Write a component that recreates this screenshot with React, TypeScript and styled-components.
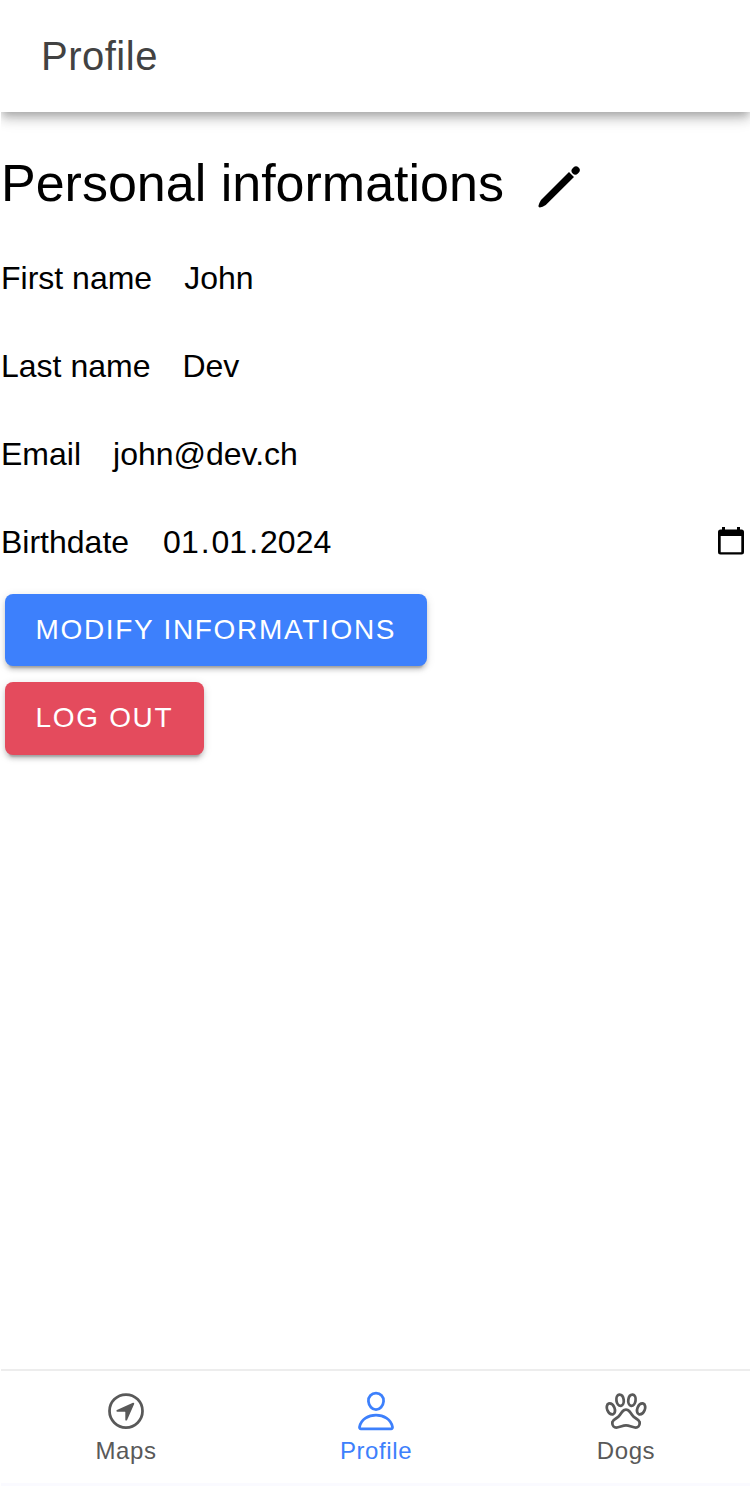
import React from "react";
import styled, { createGlobalStyle } from "styled-components";
import { IoNavigateCircleOutline, IoPawOutline, IoPersonOutline } from "react-icons/io5";

const GlobalStyle = createGlobalStyle`
  * { box-sizing: border-box; }
  body { margin: 0; background: #fff; font-family: "Liberation Sans", Arial, sans-serif; color: #000; }
`;

const Page = styled.div`
  display: flex;
  flex-direction: column;
  height: 1486px;
  padding-left: 1px;
  overflow: hidden;
`;

const Header = styled.header`
  display: flex;
  align-items: center;
  flex: none;
  height: 112px;
  padding-left: 40px;
  background: #fff;
  box-shadow: 0 4px 8px -2px rgba(0, 0, 0, 0.2), 0 8px 10px rgba(0, 0, 0, 0.14), 0 2px 20px rgba(0, 0, 0, 0.12);
  clip-path: inset(0 0 -40px 0);
`;

const Title = styled.h1`
  margin: 0;
  font-size: 40px;
  font-weight: 400;
  letter-spacing: 0.5px;
  color: #424242;
`;

const Content = styled.main`
  flex: 1;
  display: flex;
  flex-direction: column;
  align-items: flex-start;
`;

const Heading = styled.h2`
  display: flex;
  align-items: center;
  height: 62px;
  margin: 40px 0 20px;
  font-size: 52px;
  font-weight: 400;
  line-height: 62px;
`;

const EditIcon = styled.svg`
  display: block;
  width: 52px;
  height: 52px;
  margin: 6px 0 0 29px;
`;

const Row = styled.div`
  display: flex;
  align-items: center;
  width: 100%;
  height: 88px;
  padding-right: 4px;
  font-size: 32px;
`;

const Value = styled.span`
  flex: 1;
  padding-left: 32px;
`;

const DatePart = styled.span`
  padding: 0 2px;
`;

const CalendarIcon = styled.svg`
  display: block;
  width: 30px;
  height: 30px;
`;

const Button = styled.button<{ $color: string; $height: number }>`
  height: ${(p) => p.$height}px;
  margin: 8px 4px;
  padding: 0 31px ${(p) => (p.$height - 71)}px 30.5px;
  border: 0;
  border-radius: 8px;
  background: ${(p) => p.$color};
  color: #fff;
  font: 400 28px "Liberation Sans", Arial, sans-serif;
  letter-spacing: 1.68px;
  box-shadow: 0 6px 2px -4px rgba(0, 0, 0, 0.2), 0 4px 4px rgba(0, 0, 0, 0.14), 0 2px 10px rgba(0, 0, 0, 0.12);
`;

const TabBar = styled.nav`
  display: flex;
  flex: none;
  height: 117px;
  margin-right: -1px;
  border-top: 2px solid #ededed;
  border-bottom: 3px solid #fafaff;
`;

const Tab = styled.a<{ $active?: boolean }>`
  flex: 1;
  display: flex;
  flex-direction: column;
  align-items: center;
  padding-top: 18px;
  color: ${(p) => (p.$active ? "#3d80fc" : "#595959")};
  font-size: 24px;
  line-height: 28px;
  letter-spacing: 0.6px;

  svg {
    display: block;
    margin-bottom: 4px;
  }
`;

export default function App() {
  return (
    <>
      <GlobalStyle />
      <Page>
        <Header>
          <Title>Profile</Title>
        </Header>
        <Content>
          <Heading>
            Personal informations
            <EditIcon viewBox="0 0 52 52">
              <path d="M42.300 10.900 43 10.200" stroke="#000" strokeWidth="7.400" strokeLinecap="round" />
              <path d="M36 12 41 17 12.800 45Q9.500 47.300 6.800 47.600 5.100 47.400 5.500 45.600 6 43.200 8 40z" />
            </EditIcon>
          </Heading>
          <Row>
            First name<Value>John</Value>
          </Row>
          <Row>
            Last name<Value>Dev</Value>
          </Row>
          <Row>
            Email<Value>john@dev.ch</Value>
          </Row>
          <Row>
            Birthdate
            <Value>
              <DatePart>01</DatePart>.<DatePart>01</DatePart>.<DatePart>2024</DatePart>
            </Value>
            <CalendarIcon viewBox="0 0 30 30">
              <path
                fillRule="evenodd"
                d="M6 0h3v2.500h12V0h3v2.500h1.500a2.500 2.500 0 0 1 2.500 2.500v20a2.500 2.500 0 0 1-2.500 2.500h-21A2.500 2.500 0 0 1 2 25v-20A2.500 2.500 0 0 1 4.500 2.500H6zM4.700 9v16.200h20.600V9z"
              />
            </CalendarIcon>
          </Row>
          <Button $color="#3d80fc" $height={72}>MODIFY INFORMATIONS</Button>
          <Button $color="#e44b5d" $height={73}>LOG OUT</Button>
        </Content>
        <TabBar>
          <Tab>
            <IoNavigateCircleOutline size={44} />
            Maps
          </Tab>
          <Tab $active>
            <IoPersonOutline size={44} />
            Profile
          </Tab>
          <Tab>
            <IoPawOutline size={44} />
            Dogs
          </Tab>
        </TabBar>
      </Page>
    </>
  );
}
